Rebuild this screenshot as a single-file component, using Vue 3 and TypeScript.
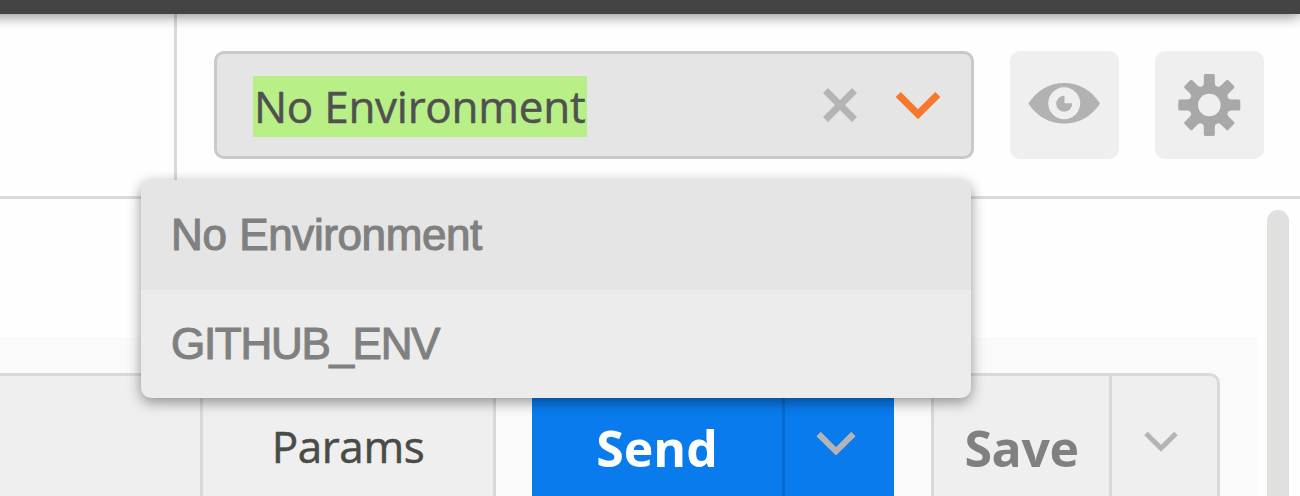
<script setup lang="ts">
import { ref } from 'vue'

const environments = ref<string[]>(['No Environment', 'GITHUB_ENV'])
const selected = ref<string>('No Environment')
const teeth: number[] = [0, 45, 90, 135, 180, 225, 270, 315]
</script>

<template>
  <div class="app">
    <div class="titlebar"></div>
    <header class="header">
      <div class="tabs"></div>
      <div class="environment">
        <div class="select">
          <span class="value">{{ selected }}</span>
          <svg class="clear" width="36" height="36" viewBox="0 0 36 36">
            <path d="M3.5 3.5 32.5 32.5M32.5 3.5 3.5 32.5" fill="none" stroke="#b4b4b4" stroke-width="7" />
          </svg>
          <svg class="toggle" width="46" height="30" viewBox="0 0 46 30">
            <path d="M3.2 3.5 23 23.2 42.8 3.5" fill="none" stroke="#f8772f" stroke-width="7.2" />
          </svg>
        </div>
        <button class="icon-button" aria-label="Preview">
          <svg width="108" height="108" viewBox="0 0 108 108">
            <path d="M18.300 52.500C27.500 39 39.500 32 54.200 32S81 39 90.100 52.500C81 66 69 72.500 54.200 72.500S27.500 66 18.300 52.500Z" fill="#b2b2b2" />
            <circle cx="54.200" cy="52.300" r="16" fill="#efefef" />
            <path d="M54.500 52.300V44.700A8 8 0 1 0 62.200 52.300Z" fill="#b2b2b2" />
          </svg>
        </button>
        <button class="icon-button" aria-label="Settings">
          <svg width="108" height="108" viewBox="0 0 108 108">
            <g transform="translate(54.300 54)" fill="#a8a8a8">
              <path
                v-for="angle in teeth"
                :key="angle"
                :transform="`rotate(${angle})`"
                d="M-8.500-18Q-5.500-19-5.500-22V-29.500Q-5.500-31-4-31H4Q5.500-31 5.500-29.500V-22Q5.500-19 8.500-18L5-10H-5Z"
              />
              <circle r="15.500" fill="none" stroke="#a8a8a8" stroke-width="8" />
              <circle r="11.300" fill="#efefef" />
            </g>
          </svg>
        </button>
      </div>
    </header>

    <main class="content">
      <section class="builder">
        <div class="url-group">
          <div class="url"></div>
          <div class="params">Params</div>
        </div>
        <div class="send-group">
          <div class="send">Send</div>
          <div class="send-more">
            <svg width="40" height="26" viewBox="0 0 40 26">
              <path d="M2.600 3 20 20.300 37.400 3" fill="none" stroke="#b4b4b4" stroke-width="6" />
            </svg>
          </div>
        </div>
        <div class="save-group">
          <div class="save">Save</div>
          <div class="save-more">
            <svg width="34" height="22" viewBox="0 0 34 22">
              <path d="M2 2.500 17 17.300 32 2.500" fill="none" stroke="#b4b4b4" stroke-width="5" />
            </svg>
          </div>
        </div>
      </section>
      <div class="scrollbar"></div>
    </main>

    <ul class="menu">
      <li v-for="name in environments" :key="name" :class="{ active: name === selected }">
        <span :class="{ caps: name === name.toUpperCase() }">{{ name }}</span>
      </li>
    </ul>
  </div>
</template>

<style>
body {
  margin: 0;
  overflow: hidden;
}
</style>

<style scoped>
.app,
.app * {
  box-sizing: border-box;
}

.app {
  position: relative;
  display: flex;
  flex-direction: column;
  width: 1300px;
  height: 496px;
  overflow: hidden;
  background: #fefefe;
  font-family: 'Open Sans', 'Noto Sans', sans-serif;
  font-size: 44px;
}

.titlebar {
  flex: none;
  height: 14px;
  margin-left: -20px;
  background: #444;
  box-shadow: 0 2px 14px rgba(0, 0, 0, 0.48);
  z-index: 1;
}

.header {
  flex: none;
  display: flex;
  height: 185px;
  border-bottom: 3px solid #d9d9d9;
}

.tabs {
  width: 174px;
}

.environment {
  display: flex;
  flex: 1;
  align-items: flex-start;
  padding: 37px 36px 0 37px;
  border-left: 3px solid #d9d9d9;
}

.select {
  display: flex;
  align-items: flex-start;
  width: 760px;
  height: 108px;
  padding: 22px 30px 0 36px;
  border: 3px solid #c9c9c9;
  border-radius: 10px;
  background: #e5e5e5;
}

.value {
  width: 333.5px;
  height: 61px;
  padding-left: 1px;
  line-height: 61px;
  letter-spacing: -0.27px;
  white-space: nowrap;
  color: #505050;
  background: #b8ef87;
  -webkit-text-stroke: 0.5px #505050;
}

.clear {
  margin: 11px 0 0 auto;
}

.toggle {
  margin: 15px 0 0 37px;
}

.icon-button {
  width: 108.5px;
  height: 108px;
  margin: 0 0 0 36.300px;
  padding: 0;
  border: 0;
  border-radius: 10px;
  background: #efefef;
}

.icon-button svg {
  display: block;
}

.content {
  display: flex;
  flex: 1;
  min-height: 0;
}

.builder {
  display: flex;
  width: 1257px;
  margin-top: 138px;
  padding-top: 36px;
  background: #fafafa;
}

.url-group {
  display: flex;
  width: 496px;
  border-top: 3px solid #d9d9d9;
  border-right: 3px solid #d9d9d9;
  background: #efefef;
}

.url {
  width: 200px;
}

.params {
  flex: 1;
  padding-top: 40px;
  border-left: 3px solid #d9d9d9;
  line-height: 60px;
  letter-spacing: -0.4px;
  text-align: center;
  color: #484b46;
  -webkit-text-stroke: 0.5px #484b46;
}

.send-group {
  display: flex;
  width: 362px;
  margin-left: 36px;
  background: #097bed;
}

.send {
  width: 250px;
  padding-top: 41px;
  line-height: 68px;
  font-size: 50px;
  font-weight: 700;
  text-align: center;
  color: #fff;
}

.send-more {
  flex: 1;
  padding: 58px 0 0 31px;
  border-left: 3px solid #076bce;
}

.save-group {
  display: flex;
  width: 289px;
  margin-left: 37px;
  border: 3px solid #d9d9d9;
  border-bottom: 0;
  border-radius: 0 10px 0 0;
  background: #efefef;
}

.save {
  width: 175px;
  padding-top: 38px;
  line-height: 68px;
  font-size: 50px;
  font-weight: 700;
  letter-spacing: -0.4px;
  text-align: center;
  color: #808080;
}

.save-more {
  flex: 1;
  padding: 55px 0 0 31.500px;
  border-left: 3px solid #d9d9d9;
}

.send-more svg,
.save-more svg {
  display: block;
}

.scrollbar {
  width: 22px;
  margin: 11px 0 0 10px;
  border-radius: 11px 11px 0 0;
  background: #e0e0df;
}

.menu {
  position: absolute;
  top: 180px;
  left: 141px;
  width: 830px;
  height: 218px;
  margin: 0;
  padding: 0;
  overflow: hidden;
  border-radius: 10px;
  background: #ececec;
  box-shadow: 0 4px 14px rgba(0, 0, 0, 0.42);
  list-style: none;
  z-index: 2;
}

.menu li {
  height: 109px;
  padding-left: 30px;
  font-family: 'Liberation Sans', Arial, sans-serif;
  line-height: 107px;
  letter-spacing: -0.4px;
  word-spacing: 1px;
  color: #808080;
  -webkit-text-stroke: 1.1px #808080;
}

.menu li.active {
  height: 110px;
  line-height: 110px;
  background: #e5e5e5;
}

.menu .caps {
  letter-spacing: -1.3px;
}
</style>
